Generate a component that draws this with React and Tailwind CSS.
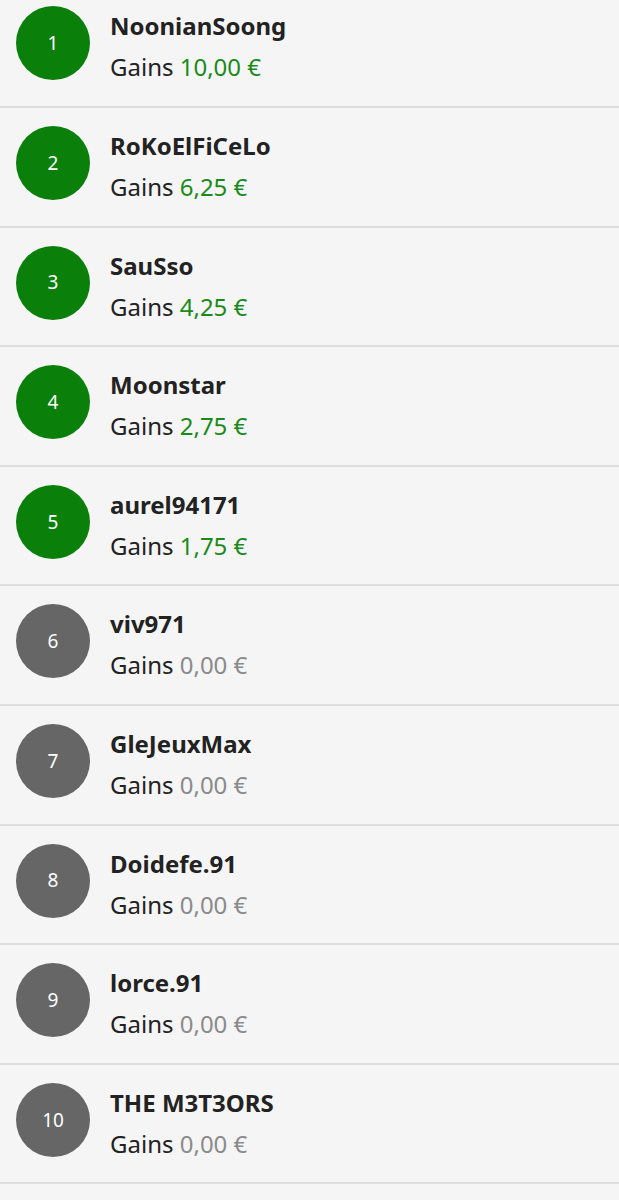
import React from 'react';

const players = [
    { rank: 1, name: 'NoonianSoong', gains: '10,00 €' },
    { rank: 2, name: 'RoKoElFiCeLo', gains: '6,25 €' },
    { rank: 3, name: 'SauSso', gains: '4,25 €' },
    { rank: 4, name: 'Moonstar', gains: '2,75 €' },
    { rank: 5, name: 'aurel94171', gains: '1,75 €' },
    { rank: 6, name: 'viv971', gains: '0,00 €' },
    { rank: 7, name: 'GleJeuxMax', gains: '0,00 €' },
    { rank: 8, name: 'Doidefe.91', gains: '0,00 €' },
    { rank: 9, name: 'lorce.91', gains: '0,00 €' },
    { rank: 10, name: 'THE M3T3ORS', gains: '0,00 €' },
];

export default function App() {
    return (
        <div
            className="h-[1200px] bg-[#f5f5f5] overflow-hidden"
            style={{ fontFamily: '"Noto Sans", "Open Sans", sans-serif' }}
        >
            <div className="-mt-[11.6px]">
                {players.map((p) => {
                    const winner = p.rank <= 5;
                    return (
                        <div
                            key={p.rank}
                            className="h-[119.6px] flex items-start pl-4 pt-[18px] border-b-2 border-[#dedede]"
                        >
                            <div
                                className={
                                    'w-[74px] h-[74px] rounded-full flex items-center justify-center text-white text-[19px] shrink-0 ' +
                                    (winner ? 'bg-[#0a800a]' : 'bg-[#666666]')
                                }
                            >
                                {p.rank}
                            </div>
                            <div className="ml-5">
                                <div className="text-[24px] font-bold text-[#222] leading-[40px]">
                                    {p.name}
                                </div>
                                <div className="text-[24px] text-[#222] leading-[42px]">
                                    Gains{' '}
                                    <span className={winner ? 'text-[#1a8a1a]' : 'text-[#8a8a8a]'}>
                                        {p.gains}
                                    </span>
                                </div>
                            </div>
                        </div>
                    );
                })}
            </div>
        </div>
    );
}
